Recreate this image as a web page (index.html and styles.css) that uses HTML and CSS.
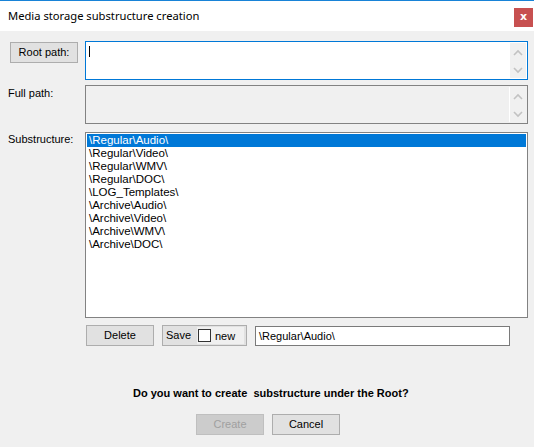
FILE: index.html
```html
<!DOCTYPE html>
<html>
<head>
<meta charset="utf-8">
<link rel="stylesheet" href="styles.css">
</head>
<body>
<div class="window">
  <div class="titlebar">
    <span class="title">Media storage substructure creation</span>
    <div class="close">x</div>
  </div>
  <div class="content">
    <div class="row r1">
      <div class="btn root-btn">Root path:</div>
      <div class="memo active">
        <div class="caret"></div>
        <div class="vscroll">
          <svg width="16" height="35" viewBox="0 0 16 35"><polyline points="4,12 8,8 12,12" fill="none" stroke="#c2c2c2" stroke-width="1.6"/><polyline points="4,25 8,29 12,25" fill="none" stroke="#c2c2c2" stroke-width="1.6"/></svg>
        </div>
      </div>
    </div>
    <div class="row r2">
      <div class="lbl">Full path:</div>
      <div class="memo disabled">
        <div class="spacer"></div>
        <div class="vscroll">
          <svg width="16" height="35" viewBox="0 0 16 35"><polyline points="4,12 8,8 12,12" fill="none" stroke="#c2c2c2" stroke-width="1.6"/><polyline points="4,25 8,29 12,25" fill="none" stroke="#c2c2c2" stroke-width="1.6"/></svg>
        </div>
      </div>
    </div>
    <div class="row r3">
      <div class="lbl">Substructure:</div>
      <ul class="list">
        <li class="sel">\Regular\Audio\</li>
        <li>\Regular\Video\</li>
        <li>\Regular\WMV\</li>
        <li>\Regular\DOC\</li>
        <li>\LOG_Templates\</li>
        <li>\Archive\Audio\</li>
        <li>\Archive\Video\</li>
        <li>\Archive\WMV\</li>
        <li>\Archive\DOC\</li>
      </ul>
    </div>
    <div class="row r4">
      <div class="btn">Delete</div>
      <div class="save">
        <span class="save-txt">Save</span>
        <span class="chk"><span class="box"></span><span class="new">new</span></span>
      </div>
      <div class="input">\Regular\Audio\</div>
    </div>
    <p class="question">Do you want to create&nbsp; substructure under the Root?</p>
    <div class="row r6">
      <div class="btn off">Create</div>
      <div class="btn">Cancel</div>
    </div>
  </div>
</div>
</body>
</html>
```

FILE: styles.css
```css
* { box-sizing: border-box; }
html, body { margin: 0; padding: 0; }
body {
  width: 534px;
  height: 447px;
  overflow: hidden;
  font-family: "Liberation Sans", Arial, sans-serif;
  font-size: 11px;
  color: #000;
  background: #f0f0f0;
}
.window { width: 534px; height: 447px; }
.titlebar {
  height: 31px;
  background: #fff;
  border-top: 1px solid #1883d7;
  display: flex;
  justify-content: space-between;
  align-items: flex-start;
}
.title {
  font-family: "Noto Sans", "Open Sans", sans-serif;
  font-size: 11.2px;
  line-height: 16px;
  margin: 7px 0 0 8px;
  color: #000;
}
.close {
  width: 19px;
  height: 19px;
  margin: 7px 1px 0 0;
  background: #c75050;
  color: #fff;
  font-family: "DejaVu Sans", sans-serif;
  font-weight: bold;
  font-size: 11px;
  line-height: 17px;
  text-align: center;
}
.content { height: 416px; background: #f0f0f0; }
.row { display: flex; }
.btn {
  width: 68px;
  height: 21px;
  background: #e1e1e1;
  border: 1px solid #adadad;
  text-align: center;
  line-height: 19px;
}
.btn.off { background: #cccccc; border-color: #bfbfbf; color: #a0a0a0; }
.r1 { padding-top: 10px; }
.root-btn { margin: 1px 0 0 10px; }
.memo {
  width: 443px;
  height: 39px;
  border: 1px solid #828282;
  background: #f0f0f0;
  display: flex;
  justify-content: space-between;
  padding: 1px;
}
.memo.active { border-color: #0078d7; background: #fff; margin-left: 7px; }
.caret { width: 1px; height: 11px; background: #000; margin: 3px 0 0 2px; }
.vscroll {
  width: 17px;
  height: 35px;
  border-left: 1px solid #fff;
  background: #f0f0f0;
}
.vscroll svg { display: block; }
.r2 { margin-top: 5px; }
.lbl { width: 85px; padding: 2px 0 0 8px; line-height: 13px; }
.r3 { margin-top: 8px; }
.r3 .lbl { padding-top: 1px; }
.list {
  margin: 0;
  padding: 1px;
  list-style: none;
  width: 443px;
  height: 186px;
  background: #fff;
  border: 1px solid #828282;
}
.list li { height: 13px; line-height: 13px; padding-left: 2px; font-size: 11.5px; }
.list li.sel { background: #0078d7; color: #fff; }
.r4 { margin-top: 7px; padding-left: 86px; align-items: flex-start; }
.save {
  width: 85px;
  height: 21px;
  margin-left: 8px;
  background: #e1e1e1;
  border: 1px solid #adadad;
  display: flex;
  align-items: stretch;
  padding: 1px 2px 1px 0;
}
.save-txt { width: 34px; padding-left: 3px; line-height: 17px; }
.chk { flex: 1; background: #f0f0f0; display: flex; align-items: center; }
.box {
  width: 13px;
  height: 13px;
  border: 1px solid #333;
  background: #fff;
  margin-left: 1px;
}
.new { margin-left: 4px; }
.input {
  width: 255px;
  height: 20px;
  margin: 1px 0 0 8px;
  background: #fff;
  border: 1px solid #7a7a7a;
  padding-left: 3px;
  line-height: 18px;
}
.question {
  margin: 41px 0 0 133px;
  font-weight: bold;
  line-height: 13px;
}
.r6 { margin-top: 14px; padding-left: 196px; gap: 8px; }
```
